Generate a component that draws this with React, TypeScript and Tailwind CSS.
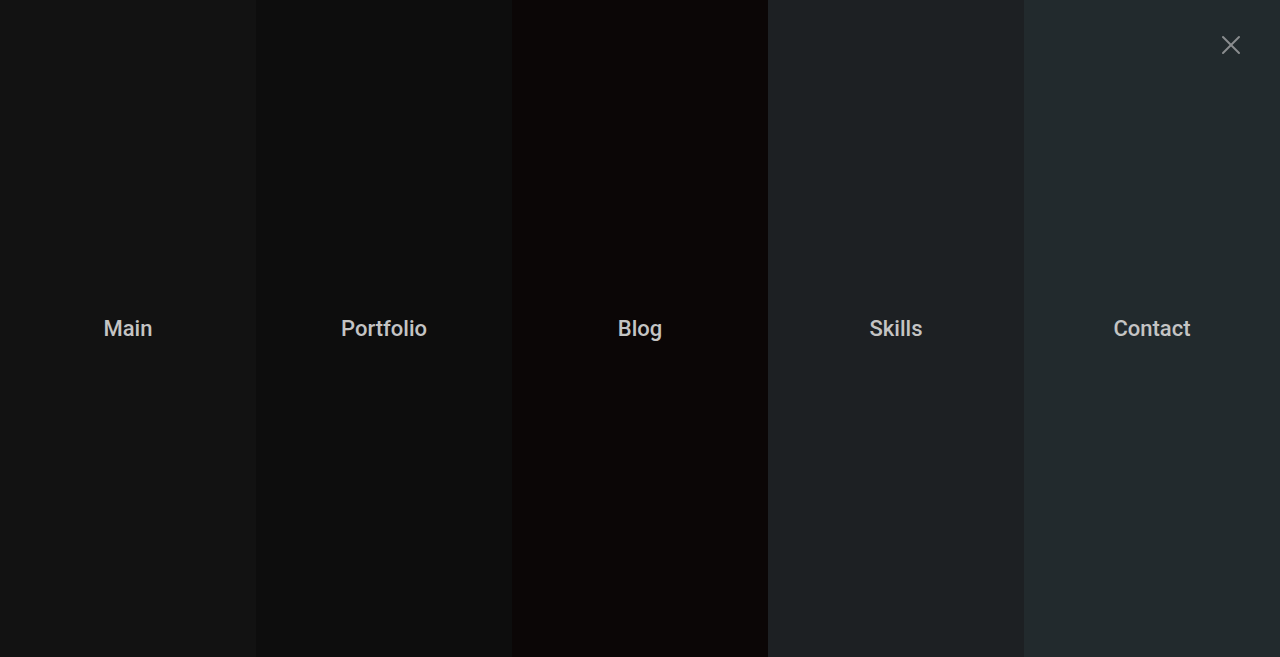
import { X } from 'lucide-react';

const panels = [
  { label: 'Main', bg: 'bg-[#121212]' },
  { label: 'Portfolio', bg: 'bg-[#0d0d0d]' },
  { label: 'Blog', bg: 'bg-[#0b0606]' },
  { label: 'Skills', bg: 'bg-[#1d2023]' },
  { label: 'Contact', bg: 'bg-[#222a2d]' },
];

export default function App() {
  return (
    <div className="relative h-[657px] w-full overflow-hidden font-['Roboto',sans-serif]">
      <nav className="grid h-full grid-cols-5">
        {panels.map((p) => (
          <a
            key={p.label}
            href="#"
            className={`flex items-center justify-center ${p.bg} text-[22px] font-medium text-[#c4c4c4]`}
          >
            {p.label}
          </a>
        ))}
      </nav>
      <button className="absolute right-[33px] top-[29px] text-[#8a8d8f]">
        <X className="h-[32px] w-[32px]" strokeWidth={1.5} />
      </button>
    </div>
  );
}
